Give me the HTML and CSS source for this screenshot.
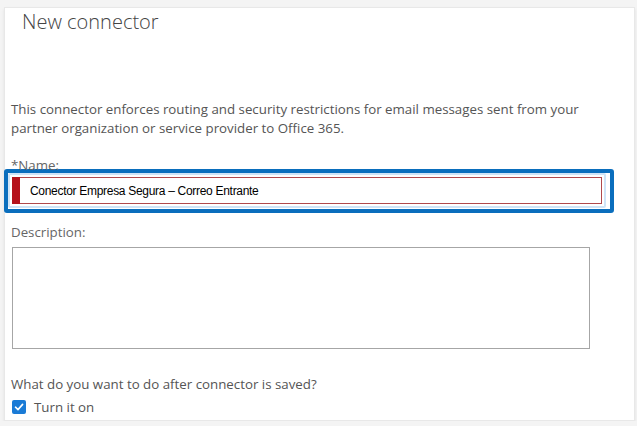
FILE: index.html
```html
<!DOCTYPE html>
<html lang="en">
<head>
    <meta charset="UTF-8">
    <meta name="viewport" content="width=device-width, initial-scale=1.0">
    <title>New connector</title>
    <link rel="stylesheet" href="styles.css">
</head>
<body>
    <div class="panel">
        <h1 class="title">New connector</h1>
        <p class="intro">This connector enforces routing and security restrictions for email messages sent from your partner organization or service provider to Office 365.</p>

        <label class="field-label name-label" for="name">*Name:</label>
        <div class="highlight">
            <div class="name-input">
                <span class="required-bar"></span>
                <input type="text" id="name" value="Conector Empresa Segura – Correo Entrante">
            </div>
        </div>

        <label class="field-label desc-label" for="desc">Description:</label>
        <textarea id="desc"></textarea>

        <p class="question">What do you want to do after connector is saved?</p>
        <label class="check-row">
            <span class="checkbox">
                <svg width="10" height="10" viewBox="0 0 10 10"><path d="M1.5 5.2 L4 7.6 L8.6 2.4" fill="none" stroke="#fff" stroke-width="1.6" stroke-linecap="round" stroke-linejoin="round"/></svg>
            </span>
            Turn it on
        </label>
    </div>
</body>
</html>
```

FILE: styles.css
```css
body {
    margin: 0;
    background-color: #f4f4f4;
    font-family: 'Open Sans', 'Noto Sans', sans-serif;
    color: #555;
}
.panel {
    box-sizing: border-box;
    width: 631px;
    height: 414px;
    margin: 7px 0 0 4px;
    padding: 0 0 0 6px;
    background-color: #fff;
    border: 1px solid #e8e8e8;
    box-shadow: 0 2px 3px rgba(0,0,0,0.08);
}
.title {
    margin: 0 0 0 11px;
    font-size: 20px;
    font-weight: 300;
    line-height: 28px;
    color: #444;
}
.intro {
    margin: 64px 0 0 0;
    width: 600px;
    font-size: 13.3px;
    line-height: 19px;
    color: #555;
}
.field-label {
    display: block;
    font-size: 13.3px;
    line-height: 18px;
    color: #666;
}
.name-label {
    margin-top: 18px;
    height: 8px;
    overflow: visible;
}
.highlight {
    box-sizing: border-box;
    width: 610px;
    height: 44px;
    margin: 5px 0 0 -7px;
    padding: 0 4px 1px 0;
    border: 4px solid #0a6ebd;
    border-radius: 3px;
    background-color: #fff;
}
.name-input {
    display: flex;
    box-sizing: border-box;
    height: 35px;
    padding: 2px;
    border: 2px solid #cfe4f7;
    border-radius: 2px;
}
.required-bar {
    width: 7px;
    background-color: #b5121b;
    border: 1px solid #b5121b;
    border-right: none;
}
.name-input input {
    flex: 1;
    min-width: 0;
    margin: 0;
    padding: 0 0 0 10px;
    border: 1px solid #b0494c;
    border-left: none;
    font-family: 'Liberation Sans', Arial, sans-serif;
    font-size: 12px;
    letter-spacing: -0.3px;
    color: #000;
    outline: none;
    background: #fff;
}
.desc-label {
    margin-top: 10px;
}
textarea {
    display: block;
    box-sizing: border-box;
    width: 578px;
    height: 102px;
    margin: 6px 0 0 1px;
    border: 1px solid #a6a6a6;
    resize: none;
    font-family: inherit;
}
.question {
    margin: 26px 0 0 0;
    font-size: 13.3px;
    line-height: 19px;
    color: #555;
}
.check-row {
    display: flex;
    align-items: center;
    gap: 8px;
    margin: 4px 0 0 1px;
    font-size: 13.3px;
    line-height: 18px;
    color: #555;
}
.checkbox {
    display: flex;
    align-items: center;
    justify-content: center;
    width: 14px;
    height: 14px;
    background-color: #1a7bd6;
    border-radius: 2px;
}
```
